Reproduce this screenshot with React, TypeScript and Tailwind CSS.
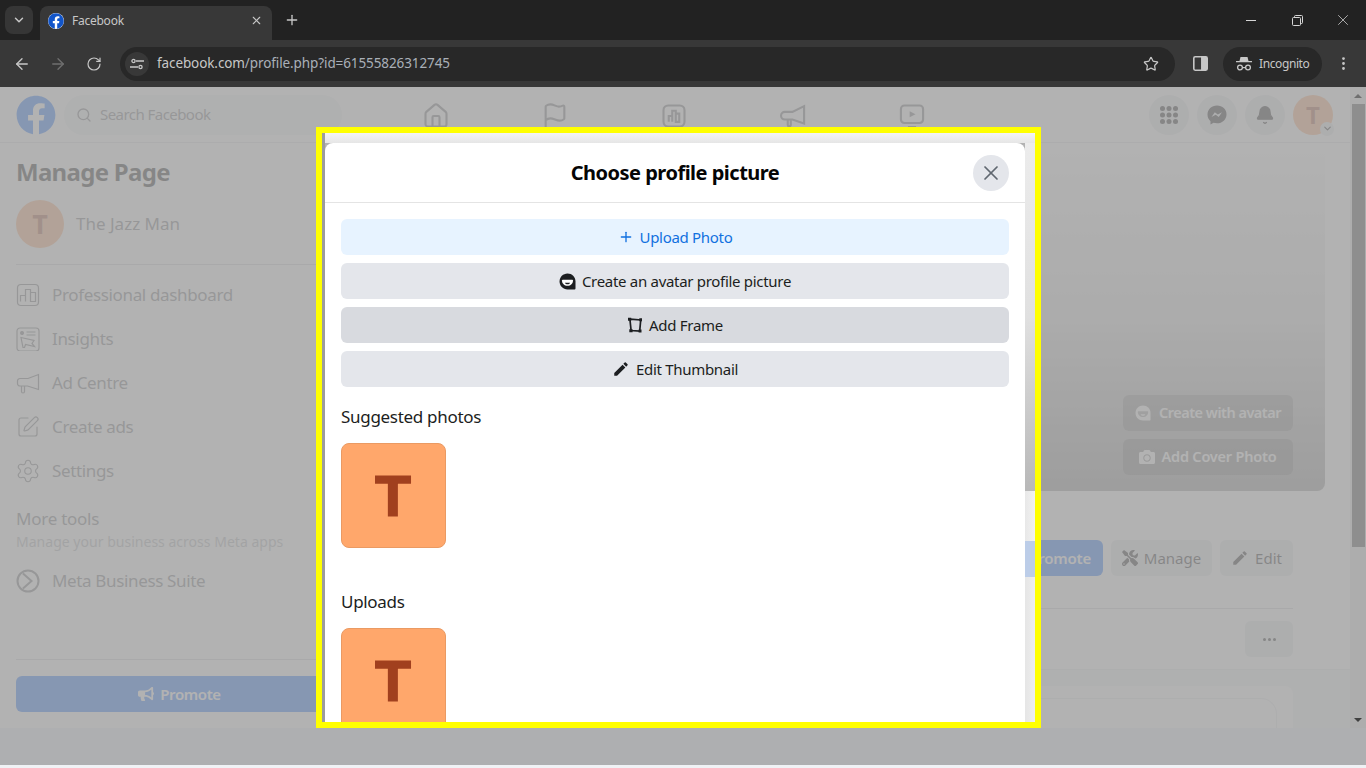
import { Home, Flag, Megaphone, Search, Settings, SquarePen, Plus, X, Star, RotateCw, ArrowLeft, ArrowRight, ChevronDown, Bell, MoreVertical } from "lucide-react";
import { FaFacebook, FaCamera, FaTools, FaBullhorn } from "react-icons/fa";
import { MdEdit } from "react-icons/md";

const font = "font-['Noto_Sans','Liberation_Sans',sans-serif]";

function AvatarGlyph({ className, mouth }: { className: string; mouth: string }) {
    return (
        <svg viewBox="0 0 16 16" className={className} fill="currentColor">
            <path d="M8 0.500c4.200 0 7.500 3.200 7.500 7.300v6.900c0 .5-.4.800-.8.800H8c-4.200 0-7.500-3.400-7.500-7.500S3.800.5 8 .5z" />
            <path d="M3.500 6.300h9c.4 0 .7.300.7.700 0 2.900-2.300 5-5.200 5S2.800 9.900 2.800 7c0-.4.300-.7.700-.7z" fill={mouth} />
            <path d="M5.600 9.200h4.800c-.4 1-1.300 1.500-2.400 1.500s-2-.5-2.400-1.500z" />
        </svg>
    );
}

function FrameGlyph() {
    return (
        <svg viewBox="0 0 16 16" className="w-4 h-4 text-[#1c1e21]" fill="none" stroke="currentColor" strokeWidth="1.700">
            <path d="M2.900 2.200l10.800.8-1 11-8.600-.5z" />
            <path d="M1 .8h3.200v2.900H1zM12.300 1.300H15v3h-2.700zM11.600 12.600h2.900v2.900h-2.900zM2.300 12.300h3.300v3H2.300z" fill="currentColor" stroke="none" />
        </svg>
    );
}

function ModalRow({ bg, children }: { bg: string; children: React.ReactNode }) {
    return <div className={`h-9 rounded-md flex items-center justify-center gap-[6px] text-[15px] tracking-[-0.3px] font-normal text-[#1c1e21] ${bg}`}>{children}</div>;
}

function PhotoTile() {
    return (
        <div className="w-[105px] h-[105px] shrink-0 rounded-lg bg-[#ffa76b] border border-[#ea9a63] flex items-center justify-center">
            <svg viewBox="0 0 38 42" className="w-[37px] h-[42px]" fill="#a1401e">
                <path d="M0 0h37v8.500H23.500V42H13.200V8.500H0z" />
            </svg>
        </div>
    );
}

function SideItem({ icon, label }: { icon: React.ReactNode; label: string }) {
    return (
        <div className="h-11 flex items-center gap-3 text-[17px] font-normal tracking-[-0.35px] text-[#65676b]">
            <span className="w-6 h-6 flex items-center justify-center text-[#65676b]">{icon}</span>
            {label}
        </div>
    );
}

function RoundBtn({ children }: { children: React.ReactNode }) {
    return <div className="w-10 h-10 rounded-full bg-[#e4e6eb] flex items-center justify-center text-[#050505]">{children}</div>;
}

function Sidebar() {
    return (
        <aside className="w-[360px] shrink-0 flex flex-col px-4 bg-white border-r border-[#e4e6eb]">
            <h1 className="mt-[11px] text-2xl leading-9 font-bold text-[#050505] tracking-[-0.7px]">Manage Page</h1>
            <div className="mt-[10px] flex items-center gap-3 pb-4 border-b border-[#ced0d4]">
                <div className="w-12 h-12 rounded-full bg-[#ffa76b] flex items-center justify-center text-[27px] font-bold text-[#a1401e]">T</div>
                <span className="text-[17px] tracking-[0px] font-normal text-[#65676b]">The Jazz Man</span>
            </div>
            <div className="mt-2">
                <SideItem
                    label="Professional dashboard"
                    icon={
                        <svg viewBox="0 0 24 24" className="w-6 h-6" fill="none" stroke="currentColor" strokeWidth="1.200">
                            <rect x="1.500" y="1.500" width="21" height="21" rx="3.500" />
                            <path d="M4.500 18.500v-6h5v6M9.500 18.500V6.500h5v12M14.500 18.500V9.500h5v9z" />
                        </svg>
                    }
                />
                <SideItem
                    label="Insights"
                    icon={
                        <svg viewBox="0 0 24 24" className="w-6 h-6" fill="none" stroke="currentColor" strokeWidth="1.200">
                            <rect x="1" y="1" width="22" height="23" rx="3" />
                            <circle cx="6" cy="6" r="1.400" fill="currentColor" />
                            <path d="M10.500 5h9M10.500 8h9M5 10.500l13 3-2 3 2.500 3-9-2-1 3-1.500 0z" />
                        </svg>
                    }
                />
                <SideItem
                    label="Ad Centre"
                    icon={
                        <svg viewBox="0 0 24 24" className="w-6 h-6" fill="none" stroke="currentColor" strokeWidth="1.200">
                            <path d="M22.500 3.500v15l-11-3.500H4a2.500 2.500 0 0 1-2.500-2.500V10A2.500 2.500 0 0 1 4 7.500h8z" />
                            <path d="M5.500 15v5.500a1.500 1.500 0 0 0 3 0V15" />
                        </svg>
                    }
                />
                <SideItem label="Create ads" icon={<SquarePen size={24} strokeWidth={1.200} />} />
                <SideItem label="Settings" icon={<Settings size={26} strokeWidth={1} className="shrink-0" />} />
            </div>
            <p className="mt-[16px] text-[17px] leading-5 font-normal text-[#65676b] tracking-[-0.25px]">More tools</p>
            <p className="mt-[3px] text-[14px] leading-5 tracking-[0.02px] text-[#a8abaf]">Manage your business across Meta apps</p>
            <div className="mt-[7px]">
                <SideItem
                    label="Meta Business Suite"
                    icon={
                        <svg viewBox="0 0 24 24" className="w-6 h-6" fill="none" stroke="currentColor" strokeWidth="2">
                            <circle cx="12" cy="12" r="10.500" />
                            <path d="M7 4.500 L15.500 12 L7 19.500" />
                        </svg>
                    }
                />
            </div>
            <div className="mt-auto border-t border-[#ced0d4] pt-4 pb-4">
                <div className="h-9 rounded-md bg-[#0866ff] flex items-center justify-center gap-[6px] text-white text-[15px] font-semibold tracking-[-0.4px]">
                    <FaBullhorn size={16} />
                    Promote
                </div>
            </div>
        </aside>
    );
}

function MainColumn() {
    return (
        <main className="flex-1 flex flex-col min-w-0 bg-white">
            <div className="ml-4 mr-[25px] h-[348px] rounded-b-lg bg-gradient-to-b from-white via-[#dcdcdc] to-[#8c8c8c] flex flex-col items-end justify-end gap-2 pr-8 pb-4 shrink-0">
                <div className="w-[170px] h-9 rounded-md bg-black/25 flex items-center justify-center gap-2 text-white text-[14.500px] tracking-[-0.5px] font-semibold">
                    <AvatarGlyph className="w-4 h-4" mouth="#999999" />
                    Create with avatar
                </div>
                <div className="w-[170px] h-9 rounded-md bg-black/25 flex items-center justify-center gap-[6px] text-white text-[14.500px] tracking-[-0.2px] font-semibold">
                    <FaCamera size={16} />
                    Add Cover Photo
                </div>
            </div>
            <div className="mt-[49px] pr-[57px] flex justify-end gap-2">
                <div className="w-[140px] h-9 rounded-md bg-[#0866ff] flex items-center justify-end pr-3 text-white text-[15px] tracking-[-0.2px] font-semibold">Promote</div>
                <div className="w-[101px] h-9 rounded-md bg-[#e4e6eb] flex items-center justify-center gap-[6px] text-[15px] font-normal text-[#050505]">
                    <FaTools size={16} />
                    Manage
                </div>
                <div className="w-[73px] h-9 rounded-md bg-[#e4e6eb] flex items-center justify-center gap-[6px] text-[15px] font-normal text-[#050505]">
                    <MdEdit size={18} />
                    Edit
                </div>
            </div>
            <div className="mt-8 mr-[57px] ml-4 border-t border-[#ced0d4] pt-3 flex justify-end">
                <div className="w-12 h-9 rounded-md bg-[#e4e6eb] flex items-center justify-center gap-[2px]">
                    <i className="w-[3px] h-[3px] rounded-full bg-[#050505]" />
                    <i className="w-[3px] h-[3px] rounded-full bg-[#050505]" />
                    <i className="w-[3px] h-[3px] rounded-full bg-[#050505]" />
                </div>
            </div>
            <div className="mt-3 flex-1 bg-[#f0f2f5] border-t border-[#e4e6eb] pt-4 pr-[57px] pl-4">
                <div className="h-full rounded-t-lg bg-white pt-3 pr-4">
                    <div className="h-full rounded-tr-2xl border-t border-r border-[#e4e6eb]" />
                </div>
            </div>
        </main>
    );
}

function FacebookPage() {
    return (
        <div className="relative flex-1 min-w-0 flex flex-col overflow-hidden bg-white">
            <header className="h-14 shrink-0 flex items-center border-b border-[#dddfe2] px-4 bg-white relative">
                <FaFacebook size={40} className="text-[#0866ff] shrink-0" />
                <div className="ml-2 w-[278px] h-10 rounded-full bg-[#f0f2f5] flex items-center gap-2 px-3 text-[15px] tracking-[-0.55px] text-[#65676b]">
                    <Search size={16} />
                    Search Facebook
                </div>
                <nav className="ml-[80px] mt-[3px] flex items-center gap-[91px] text-[#65676b]">
                    <Home size={28} strokeWidth={1.800} />
                    <Flag size={28} strokeWidth={1.800} />
                    <svg viewBox="0 0 24 24" className="w-7 h-7" fill="none" stroke="currentColor" strokeWidth="1.800">
                        <rect x="3" y="3" width="18" height="18" rx="4" />
                        <path d="M7.500 17v-5h3v5M10.500 17V7.500h3V17M13.500 17v-7h3v7z" />
                    </svg>
                    <svg viewBox="0 0 24 24" className="w-7 h-7" fill="none" stroke="currentColor" strokeWidth="1.800">
                        <path d="M21.500 3.500v15l-10-3.500H5a2.500 2.500 0 0 1 0-6.500h6.500z" />
                        <path d="M7.500 15v4.500a1.300 1.300 0 0 0 2.600 0V15" />
                    </svg>
                    <svg viewBox="0 0 24 24" className="w-7 h-7" fill="none" stroke="currentColor" strokeWidth="1.800">
                        <rect x="2.500" y="3" width="19" height="15" rx="3" />
                        <path d="M10 8l5 2.500-5 2.500z" fill="currentColor" stroke="none" />
                        <path d="M8.500 21.500h7" />
                    </svg>
                </nav>
                <div className="ml-auto mr-[1px] flex gap-2 items-center">
                    <RoundBtn>
                        <svg viewBox="0 0 20 20" className="w-5 h-5" fill="currentColor">
                            <circle cx="3.500" cy="3.500" r="2.500" /><circle cx="10" cy="3.500" r="2.500" /><circle cx="16.500" cy="3.500" r="2.500" />
                            <circle cx="3.500" cy="10" r="2.500" /><circle cx="10" cy="10" r="2.500" /><circle cx="16.500" cy="10" r="2.500" />
                            <circle cx="3.500" cy="16.500" r="2.500" /><circle cx="10" cy="16.500" r="2.500" /><circle cx="16.500" cy="16.500" r="2.500" />
                        </svg>
                    </RoundBtn>
                    <RoundBtn>
                        <svg viewBox="0 0 20 20" className="w-5 h-5" fill="currentColor">
                            <path d="M10 .5C4.600.5.500 4.400.500 9.600c0 2.700 1.100 5 3 6.600v3.300l3-1.700c1.100.3 2.300.5 3.500.5 5.400 0 9.500-3.900 9.500-9.100S15.400.500 10 .500z" />
                            <path d="M4.500 12l3.300-4.800 3 2.300 4.200-2.300-3.300 4.800-3-2.300z" fill="#e4e6eb" />
                        </svg>
                    </RoundBtn>
                    <RoundBtn>
                        <Bell size={20} fill="currentColor" strokeWidth={1.500} />
                    </RoundBtn>
                    <div className="relative w-10 h-10 rounded-full bg-[#ffa76b] flex items-center justify-center text-[24px] font-bold text-[#a1401e]">
                        T
                        <span className="absolute -right-[1px] -bottom-[1px] w-[14px] h-[14px] rounded-full bg-[#e4e6eb] flex items-center justify-center text-[#050505]">
                            <ChevronDown size={11} strokeWidth={2.500} />
                        </span>
                    </div>
                </div>
            </header>
            <div className="flex-1 flex min-h-0">
                <Sidebar />
                <MainColumn />
            </div>
            <div className="absolute inset-0 bg-white/75" />
            <div className="absolute inset-0 bg-black/30" />
        </div>
    );
}

function Scrollbar() {
    return (
        <div className="w-4 shrink-0 bg-[#adadad] flex flex-col items-center">
            <div className="h-[17px] flex items-center justify-center">
                <i className="w-0 h-0 border-x-[4px] border-x-transparent border-b-[4px] border-b-[#6f6f6f]" />
            </div>
            <div className="w-[13px] h-[443px] bg-[#8e8e8e]" />
            <div className="mt-auto h-[17px] flex items-center justify-center">
                <i className="w-0 h-0 border-x-[4px] border-x-transparent border-t-[4px] border-t-[#404040]" />
            </div>
        </div>
    );
}

function ChromeBars() {
    return (
        <>
            <div className="h-10 shrink-0 bg-[#222222] flex items-end pl-[5px] relative">
                <div className="self-start mt-[6px] w-7 h-7 rounded-lg bg-[#363636] flex items-center justify-center text-[#c7c7c7]">
                    <ChevronDown size={14} strokeWidth={2.500} />
                </div>
                <div className="ml-[7px] w-[232px] h-[34px] rounded-t-lg bg-[#383838] flex items-center pl-2 pr-[9px] pb-[5px] text-[12px] tracking-[-0.25px] text-[#c7c7c7]">
                    <span className="w-4 h-4 rounded-full bg-white flex items-center justify-center">
                        <FaFacebook size={16} className="text-[#1255c9]" />
                    </span>
                    <span className="ml-2 flex-1">Facebook</span>
                    <X size={13} strokeWidth={2} />
                </div>
                <Plus size={16} strokeWidth={2} className="self-start mt-3 ml-3 text-[#c7c7c7]" />
                <div className="ml-auto flex self-start mt-[10px] text-[#d6d6d6]">
                    <div className="w-[46px] h-5 flex items-center justify-center">
                        <i className="w-[10px] h-px bg-[#d6d6d6]" />
                    </div>
                    <div className="w-[46px] h-5 flex items-center justify-center">
                        <svg viewBox="0 0 11 11" className="w-[11px] h-[11px]" fill="none" stroke="currentColor">
                            <rect x=".5" y="2.500" width="8" height="8" rx="1" />
                            <path d="M2.500 2.500v-1a1 1 0 0 1 1-1h6a1 1 0 0 1 1 1v6a1 1 0 0 1-1 1h-1" />
                        </svg>
                    </div>
                    <div className="w-[46px] h-5 flex items-center justify-center">
                        <X size={18} strokeWidth={1} />
                    </div>
                </div>
            </div>
            <div className="h-[47px] shrink-0 bg-[#383838] flex items-center pl-[13px] pr-[13px] text-[#c7c7c7]">
                <ArrowLeft size={18} strokeWidth={1.800} />
                <ArrowRight size={18} strokeWidth={1.800} className="ml-[18px] text-[#6f6f6f]" />
                <RotateCw size={16} strokeWidth={1.800} className="ml-[19px]" />
                <div className="ml-[18px] w-[1055px] h-[34px] rounded-full bg-[#282828] flex items-center pl-[5px] pr-4">
                    <span className="w-6 h-6 rounded-full bg-[#383838] flex items-center justify-center">
                        <svg viewBox="0 0 14 12" className="w-[14px] h-3" fill="none" stroke="currentColor" strokeWidth="1.300">
                            <circle cx="3.500" cy="3" r="1.600" />
                            <path d="M6 3h8M0 9h8" />
                            <circle cx="10.500" cy="9" r="1.600" />
                        </svg>
                    </span>
                    <span className="ml-2 text-[13.500px] tracking-[-0.1px] text-[#aab0b8]">
                        <span className="text-[#c7c7c7]">facebook.com</span>/profile.php?id=61555826312745
                    </span>
                    <Star size={16} strokeWidth={1.800} className="ml-auto" />
                </div>
                <svg viewBox="0 0 14 14" className="ml-[18px] w-[15px] h-[15px]" fill="currentColor">
                    <path fillRule="evenodd" d="M2 0h10a2 2 0 0 1 2 2v10a2 2 0 0 1-2 2H2a2 2 0 0 1-2-2V2a2 2 0 0 1 2-2zm0 1.500a.5.5 0 0 0-.5.5v10a.5.5 0 0 0 .5.5h5.500v-11z" />
                </svg>
                <div className="ml-[15px] w-[99px] h-[34px] rounded-full bg-[#282828] flex items-center pl-[13px] gap-[7px] text-[12px] tracking-[-0.4px]">
                    <svg viewBox="0 0 16 14" className="w-4 h-[14px]" fill="currentColor">
                        <path d="M4.500 0h7l1 4H16v1.300H0V4h3.500z" />
                        <circle cx="4" cy="10.500" r="2.400" fill="none" stroke="currentColor" strokeWidth="1.300" />
                        <circle cx="12" cy="10.500" r="2.400" fill="none" stroke="currentColor" strokeWidth="1.300" />
                        <path d="M6.400 10h3.200v1.200H6.400z" />
                    </svg>
                    Incognito
                </div>
                <MoreVertical size={17} strokeWidth={2} className="ml-[13px]" />
            </div>
        </>
    );
}

function ChooseProfileModal() {
    return (
        <div className="absolute left-[316px] top-[127px] w-[725px] h-[601px] border-[6px] border-[#ffff00] flex overflow-hidden">
            <div className="w-[3px] shrink-0 bg-[#9c9c9e]" />
            <div className="flex-1 flex flex-col min-w-0">
                <div className="h-[10px] shrink-0 bg-gradient-to-b from-[#f4f4f4] to-[#e6e6e6]" />
                <div className="flex-1 flex min-h-0">
                    <div className={`w-[700px] shrink-0 rounded-t-lg bg-white flex flex-col overflow-hidden ${font}`}>
                        <div className="h-[60px] shrink-0 border-b border-[#e4e4e4] relative flex items-center justify-center">
                            <h2 className="text-[20px] font-bold text-[#050505] tracking-[-0.5px]">Choose profile picture</h2>
                            <div className="absolute right-4 top-3 w-9 h-9 rounded-full bg-[#e4e6eb] flex items-center justify-center text-[#606770]">
                                <X size={24} strokeWidth={1.700} />
                            </div>
                        </div>
                        <div className="px-4 pt-4 flex flex-col gap-2">
                            <ModalRow bg="bg-[#e7f3ff]">
                                <Plus size={16} strokeWidth={2} className="text-[#1170e0]" />
                                <span className="text-[#1170e0]">Upload Photo</span>
                            </ModalRow>
                            <ModalRow bg="bg-[#e4e6eb]">
                                <AvatarGlyph className="w-[17px] h-[17px] text-[#1c1e21]" mouth="#ffffff" />
                                Create an avatar profile picture
                            </ModalRow>
                            <ModalRow bg="bg-[#d8dadf]">
                                <FrameGlyph />
                                Add Frame
                            </ModalRow>
                            <ModalRow bg="bg-[#e4e6eb]">
                                <MdEdit size={18} className="text-[#1c1e21]" />
                                Edit Thumbnail
                            </ModalRow>
                            <h3 className="mt-[10px] text-[17px] leading-6 font-normal tracking-[-0.3px] text-[#1c1e21]">Suggested photos</h3>
                            <div className="mt-[6px]">
                                <PhotoTile />
                            </div>
                            <h3 className="mt-[34px] text-[17px] leading-6 font-normal tracking-[-0.3px] text-[#1c1e21]">Uploads</h3>
                            <div className="mt-[6px]">
                                <PhotoTile />
                            </div>
                        </div>
                    </div>
                    <div className="flex-1 flex flex-col">
                        <div className="h-[348px] bg-gradient-to-b from-[#ececec] via-[#e0e0e0] to-[#b8b8b8]" />
                        <div className="h-[50px] bg-gradient-to-r from-[#e8e8e8] to-[#f2f2f2]" />
                        <div className="h-9 bg-[#bccde8]" />
                        <div className="flex-1 bg-gradient-to-r from-[#e6e6e6] to-[#eeeeee]" />
                    </div>
                </div>
            </div>
        </div>
    );
}

export default function App() {
    return (
        <div className={`relative w-[1366px] h-[768px] overflow-hidden flex flex-col ${font}`}>
            <ChromeBars />
            <div className="h-[641px] shrink-0 flex">
                <FacebookPage />
                <Scrollbar />
            </div>
            <div className="h-[37px] shrink-0 bg-[#aeafb1]" />
            <div className="flex-1 bg-[#f0f2f5]" />
            <ChooseProfileModal />
        </div>
    );
}
